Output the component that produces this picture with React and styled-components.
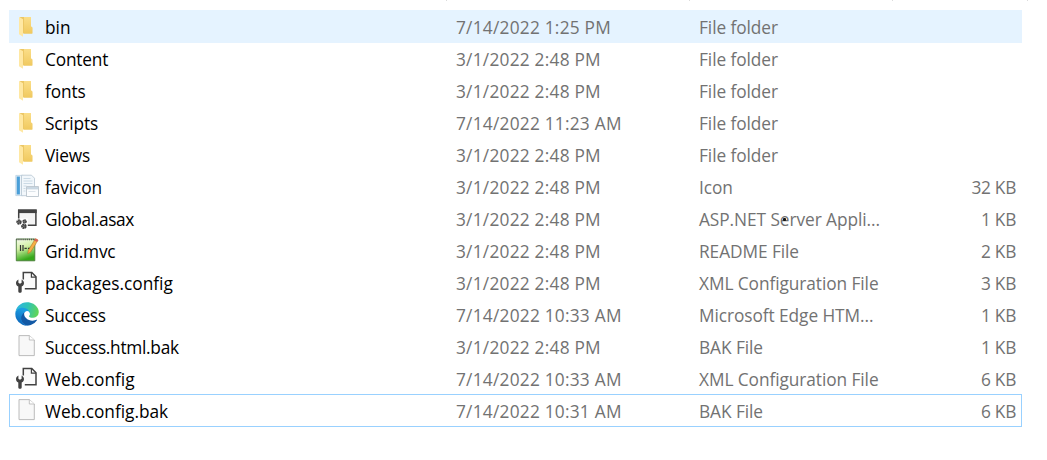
import React from 'react'
import styled, { createGlobalStyle } from 'styled-components'

const files = [
  { name: 'bin', date: '7/14/2022 1:25 PM', type: 'File folder', icon: 'folder', tracking: 0.05, hovered: true },
  { name: 'Content', date: '3/1/2022 2:48 PM', type: 'File folder', icon: 'folder', tracking: -0.2 },
  { name: 'fonts', date: '3/1/2022 2:48 PM', type: 'File folder', icon: 'folder', tracking: -0.1 },
  { name: 'Scripts', date: '7/14/2022 11:23 AM', type: 'File folder', icon: 'folder', tracking: -0.15 },
  { name: 'Views', date: '3/1/2022 2:48 PM', type: 'File folder', icon: 'folder', tracking: -0.2 },
  { name: 'favicon', date: '3/1/2022 2:48 PM', type: 'Icon', size: '32 KB', icon: 'picture', tracking: -0.1 },
  { name: 'Global.asax', date: '3/1/2022 2:48 PM', type: 'ASP.NET Server Appli...', size: '1 KB', icon: 'server', tracking: -0.35, pointer: true },
  { name: 'Grid.mvc', date: '3/1/2022 2:48 PM', type: 'README File', size: '2 KB', icon: 'notepad', tracking: -0.2 },
  { name: 'packages.config', date: '3/1/2022 2:48 PM', type: 'XML Configuration File', size: '3 KB', icon: 'config', tracking: 0 },
  { name: 'Success', date: '7/14/2022 10:33 AM', type: 'Microsoft Edge HTM...', size: '1 KB', icon: 'edge', tracking: -0.3 },
  { name: 'Success.html.bak', date: '3/1/2022 2:48 PM', type: 'BAK File', size: '1 KB', icon: 'page', tracking: -0.28 },
  { name: 'Web.config', date: '7/14/2022 10:33 AM', type: 'XML Configuration File', size: '6 KB', icon: 'config', tracking: 0 },
  { name: 'Web.config.bak', date: '7/14/2022 10:31 AM', type: 'BAK File', size: '6 KB', icon: 'page', tracking: -0.02, focused: true },
]

const Folder = () => (
  <>
    <path d="M5 3h11v9.5l1.3 1V19.5H5z" fill="#ecc765" />
    <path d="M9 3h7v9.5l1.3 1V19.5H9z" fill="url(#folderBack)" />
    <path d="M4 2.8l4 2.5v17.4L4 20.3z" fill="#ffe8a3" />
  </>
)

const Picture = () => (
  <>
    <path d="M.8 1.4h7v20.2h-7z" fill="#eef4f9" stroke="#b9cfdf" strokeWidth=".8" />
    <path d="M1.7 2.5h3.2v18H1.7z" fill="#4a9fd8" />
    <path d="M6.5 1.2h10l3 3v17.5h-13z" fill="#f2f7fb" stroke="#b4c4d1" strokeWidth=".8" />
    <path d="M8.5 4.5h7M8.5 7h9M8.5 9.5h9M8.5 12h3M8.5 14.5h2M8.5 17h2" stroke="#c6d6e2" strokeWidth=".9" />
    <path d="M11.5 12.5h12v10h-12z" fill="#fcfdfe" stroke="#b3bec7" strokeWidth=".8" />
    <path d="M12 13h11v2.4H12z" fill="#c9d7e2" />
    <path d="M13.5 17.5h7" stroke="#dde4ea" />
  </>
)

const Server = () => (
  <>
    <path d="M3.7 4.3h17.2v15H3.7z" fill="#f4f4f4" stroke="#424242" strokeWidth="1.5" />
    <path d="M3 3.5h18.7v3.6H3z" fill="#424242" />
    <path d="M0 12.5h12.8V24H0z" fill="#fff" />
    <circle cx="4" cy="16" r="1.7" fill="#777" stroke="#424242" strokeWidth="2" strokeDasharray="1.7 .4" />
    <circle cx="9.6" cy="15.4" r="1.4" fill="#777" stroke="#424242" strokeWidth="1.7" strokeDasharray="1.5 .4" />
    <circle cx="8.9" cy="20.2" r="1.8" fill="#777" stroke="#424242" strokeWidth="2" strokeDasharray="1.7 .4" />
  </>
)

const Notepad = () => (
  <>
    <path d="M1.3 1h18.5v21.8H1.3z" fill="url(#pad)" stroke="#4c7a3a" strokeWidth=".9" />
    <path d="M1.3 1.5h18.5" stroke="#555" strokeWidth="1.6" strokeDasharray="1.1 1" />
    <path d="M5.5 7v6M8 7v6M9.5 10.3h2.3M13 10.3h2.3" stroke="#333" strokeWidth="1.2" />
    <path d="M20.5 .6l2.6 1.5-7.3 11.8-3 1.8.5-3.4z" fill="#f6b045" stroke="#a86a20" strokeWidth=".5" />
    <path d="M20.5 .6l2.6 1.5-1.1 1.8-2.6-1.5z" fill="#d9605a" />
  </>
)

const Config = () => (
  <>
    <path d="M8.3 9.5V2.5h8.5l4.2 4.2v12.1H9.8" fill="#fafafa" stroke="#424242" strokeWidth="1.5" />
    <path d="M16.4 2.5v4.6H21" fill="none" stroke="#424242" strokeWidth="1.2" />
    <path
      d="M3.4 9.4v3.4l1.6 1 1.6-1V9.4c1.5.7 2.4 2 2.4 3.5 0 1.6-.9 2.9-2.3 3.5V21.2c0 1-.7 1.6-1.7 1.6s-1.7-.6-1.7-1.6V16.4C1.9 15.800 1 14.500 1 12.900 1 11.400 1.900 10.100 3.400 9.400z"
      fill="#424242"
    />
  </>
)

const Edge = () => (
  <g transform="translate(.3 .2) scale(.0917) translate(-4.6 -5)">
    <path d="M235.68 195.46a93.73 93.73 0 0 1-10.54 4.71 101.87 101.87 0 0 1-35.9 6.46c-47.32 0-88.54-32.55-88.54-74.32A31.48 31.48 0 0 1 117.13 105c-42.8 1.8-53.8 46.4-53.8 72.53 0 73.88 68.09 81.37 82.76 81.37 7.91 0 19.84-2.3 27-4.56l1.31-.44a128.34 128.34 0 0 0 66.6-52.8 4 4 0 0 0-5.32-5.64z" fill="#1259a5" />
    <path d="M105.73 246.42A79.2 79.2 0 0 1 83 225.08a80.72 80.72 0 0 1 34.1-120c3.12-1.47 8.45-4.13 15.54-4a32.35 32.35 0 0 1 25.69 13 31.88 31.88 0 0 1 6.36 18.66c0-.21 24.46-79.6-80-79.6-43.9 0-80 41.66-80 78.21a130.15 130.15 0 0 0 12.11 56 128 128 0 0 0 156.38 67.11 75.55 75.55 0 0 1-67.45-8z" fill="url(#edgeBlue)" />
    <path d="M156.94 153.78c-.81 1.05-3.3 2.5-3.3 5.66 0 2.61 1.7 5.12 4.72 7.23 14.38 10 41.49 8.68 41.56 8.68a59.56 59.56 0 0 0 30.27-8.35 61.38 61.38 0 0 0 30.43-52.88c.26-22.41-8-37.31-11.34-43.91C228.09 28.76 182.35 5 132.61 5a128 128 0 0 0-128 126.2c.48-36.54 36.8-66.05 80-66.05 3.5 0 23.46.34 42 10.07 16.34 8.58 24.9 18.94 30.85 29.21 6.18 10.67 7.28 24.15 7.28 29.52s-2.74 13.33-7.8 19.83z" fill="url(#edgeGreen)" />
  </g>
)

const Page = () => (
  <>
    <path d="M4 1.6h10.5L19.3 6v15.6H4z" fill="#f8f8f8" stroke="#b4b4b4" strokeWidth=".9" />
    <path d="M14.3 1.6V6h5" fill="#fff" stroke="#b4b4b4" strokeWidth=".8" />
  </>
)

const icons = { folder: Folder, picture: Picture, server: Server, notepad: Notepad, config: Config, edge: Edge, page: Page }

function FileRow({ file }) {
  const Drawing = icons[file.icon]
  return (
    <Row $hovered={file.hovered} $focused={file.focused}>
      <Icon viewBox="0 0 24 24"><Drawing /></Icon>
      <Name $tracking={file.tracking}>{file.name}</Name>
      <Modified>{file.date}</Modified>
      <Type>
        {file.type}
        {file.pointer && <PointerDot />}
      </Type>
      <Size>{file.size}</Size>
    </Row>
  )
}

function App() {
  return (
    <Window>
      <GlobalStyle />
      <Gradients>
        <linearGradient id="folderBack" x1="0" y1="0" x2="0" y2="1">
          <stop offset="0" stopColor="#fbde88" />
          <stop offset="1" stopColor="#f0c95f" />
        </linearGradient>
        <linearGradient id="pad" x1="0" y1="0" x2=".3" y2="1">
          <stop offset="0" stopColor="#f7fbf0" />
          <stop offset=".45" stopColor="#d5f0a8" />
          <stop offset="1" stopColor="#35a81a" />
        </linearGradient>
        <linearGradient id="edgeBlue" x1=".6" y1=".2" x2=".3" y2="1">
          <stop offset="0" stopColor="#1b9de2" />
          <stop offset="1" stopColor="#0c62b8" />
        </linearGradient>
        <linearGradient id="edgeGreen" x1="0" y1=".3" x2="1" y2=".5">
          <stop offset="0" stopColor="#2fb3e4" />
          <stop offset=".5" stopColor="#2fc3b6" />
          <stop offset="1" stopColor="#62d655" />
        </linearGradient>
      </Gradients>
      <HeaderEdge>
        <Divider /><Divider /><Divider /><Divider />
      </HeaderEdge>
      <List>
        {files.map((file) => <FileRow key={file.name} file={file} />)}
      </List>
    </Window>
  )
}

export default App

const GlobalStyle = createGlobalStyle`
  body {
    margin: 0;
    background: #fff;
  }
`

const Window = styled.div`
  height: 460px;
  overflow: hidden;
  background: #fff;
  font-family: "Open Sans", "Noto Sans", sans-serif;
  font-size: 17.3px;
`

const Gradients = styled.svg`
  position: absolute;
  width: 0;
  height: 0;
`

const HeaderEdge = styled.div`
  display: grid;
  grid-template-columns: 243px 203px 135px 1px;
  height: 10px;
  padding-left: 446px;
`

const Divider = styled.span`
  width: 1px;
  height: 1px;
  background: #dcdcdc;
`

const List = styled.div`
  width: 1013px;
  margin-left: 9px;
`

const Row = styled.div`
  box-sizing: border-box;
  display: grid;
  grid-template-columns: 30px 411px 243px 180px 1fr;
  height: 33px;
  margin-bottom: -1px;
  padding: 0 5px;
  border: 1px solid ${(props) => (props.$focused ? '#99d1ff' : 'transparent')};
  background: ${(props) => (props.$hovered ? '#e5f3ff' : 'none')};
  line-height: 33px;
  white-space: nowrap;
`

const Icon = styled.svg`
  width: 24px;
  height: 24px;
  margin-top: 3px;
`

const Cell = styled.span`
  color: #727272;
`

const Name = styled(Cell)`
  color: #000;
  letter-spacing: ${(props) => props.$tracking}px;
`

const Modified = styled(Cell)`
  letter-spacing: 0.24px;
`

const Type = styled(Cell)`
  position: relative;
  letter-spacing: -0.07px;
`

const Size = styled(Cell)`
  text-align: right;
  letter-spacing: -0.3px;
`

const PointerDot = styled.i`
  position: absolute;
  top: 15px;
  left: 84px;
  width: 3px;
  height: 3px;
  border-radius: 1px;
  background: #111;
`
